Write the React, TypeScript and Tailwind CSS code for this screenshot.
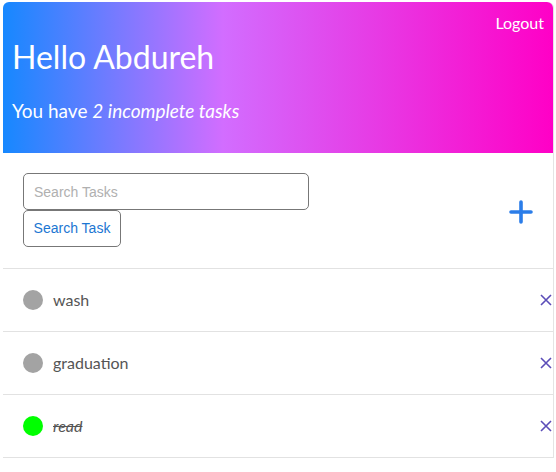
import React, { useState } from 'react';

interface Task {
  id: number;
  title: string;
  done: boolean;
}

const initialTasks: Task[] = [
  { id: 1, title: 'wash', done: false },
  { id: 2, title: 'graduation', done: false },
  { id: 3, title: 'read', done: true },
];

const PlusIcon = () => (
  <svg width="24" height="24" viewBox="0 0 24 24" fill="none">
    <path d="M12 2v20M2 12h20" stroke="#2b7de9" strokeWidth="3.6" strokeLinecap="round" />
  </svg>
);

const CloseIcon = () => (
  <svg width="12" height="12" viewBox="0 0 12 12" fill="none">
    <path d="M1 1l10 10M11 1L1 11" stroke="#5b4db8" strokeWidth="1.6" />
  </svg>
);

const App: React.FC = () => {
  const [tasks] = useState<Task[]>(initialTasks);
  const [query, setQuery] = useState('');
  const incomplete = tasks.filter((t) => !t.done).length;

  return (
    <div className="min-h-[472px] bg-white pl-[3px] pr-[2px] pt-[2px]">
      <div className="rounded-t-md border-r border-[#e4e4e4] bg-white font-['Lato',sans-serif]">
        <header className="h-[151px] rounded-t-md bg-[linear-gradient(90deg,#1688ff_0%,#d26dff_40%,#ff00c6_100%)] px-[9px] text-white">
          <div className="flex justify-end pt-[11px]">
            <button className="text-[16px] leading-5">Logout</button>
          </div>
          <h1 className="mt-[6px] text-[32px] font-normal leading-9">Hello Abdureh</h1>
          <p className="mt-[24px] text-[19px] leading-6">
            You have <em>{incomplete} incomplete tasks</em>
          </p>
        </header>

        <div className="flex items-center justify-between border-b border-[#e2e2e2] pb-[21px] pl-[20px] pr-[20px] pt-[20px]">
          <div className="flex flex-col font-['Liberation_Sans',sans-serif]">
            <input
              value={query}
              onChange={(e) => setQuery(e.target.value)}
              placeholder="Search Tasks"
              className="h-[37px] w-[286px] rounded-[5px] border border-[#777] px-[10px] text-[14px] outline-none placeholder:text-[#b0b0b0]"
            />
            <button className="h-[37px] w-[98px] rounded-[5px] border border-[#777] text-[14px] text-[#1b76d2]">
              Search Task
            </button>
          </div>
          <button className="mt-[4px]">
            <PlusIcon />
          </button>
        </div>

        <ul>
          {tasks.map((task) => (
            <li
              key={task.id}
              className="flex h-[63px] items-center justify-between border-b border-[#e2e2e2] pl-[20px] pr-[1px]"
            >
              <div className="flex items-center gap-[10px]">
                <span
                  className={
                    task.done
                      ? 'h-[20px] w-[20px] rounded-full bg-[#00ff00]'
                      : 'h-[20px] w-[20px] rounded-full bg-[#a3a3a3]'
                  }
                />
                <span
                  className={
                    task.done
                      ? 'text-[16px] italic text-[#555] line-through'
                      : 'text-[16px] text-[#555]'
                  }
                >
                  {task.title}
                </span>
              </div>
              <button>
                <CloseIcon />
              </button>
            </li>
          ))}
        </ul>
      </div>
    </div>
  );
};

export default App;
